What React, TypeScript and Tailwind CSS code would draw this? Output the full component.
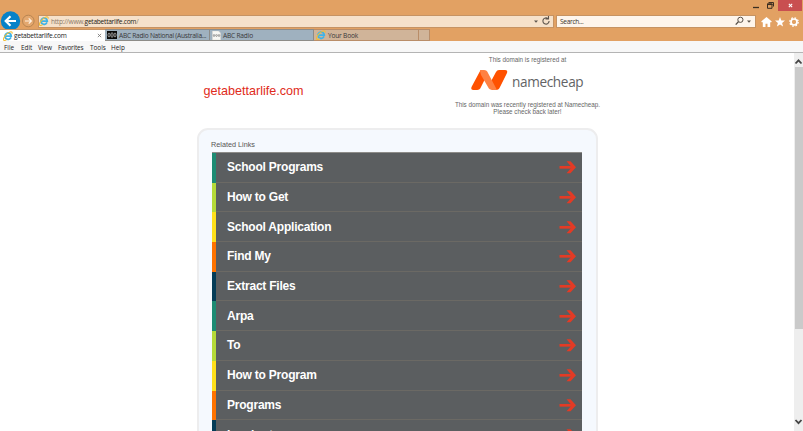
import React from "react";

const ui = "font-['Open_Sans','Noto_Sans',sans-serif]";
const arial = "font-['Liberation_Sans',Arial,sans-serif]";

function IELogo({ className = "" }: { className?: string }) {
  return (
    <svg viewBox="0 0 20 20" className={`h-[10px] w-[10px] shrink-0 ${className}`}>
      <path d="M16 12.8A6.3 6.3 0 1 1 16.5 10.3H5" fill="none" stroke="#3fb3e8" strokeWidth="3.6" />
      <path d="M1.5 18.5C-1 15 7 4 14 1.8c4-1.2 5 .8 3.8 3.7M1.5 18.5c1.5 1.2 4 .2 6-1.2" fill="none" stroke="#f2bd35" strokeWidth="2.1" />
    </svg>
  );
}

function Address() {
  return (
    <div className="flex h-[16px] items-center">
      <svg viewBox="0 0 38 20" className="h-[20px] w-[38px] shrink-0">
        <circle cx="10.5" cy="10" r="9.7" fill="#0782c8" />
        <path d="M16 10H6M10.5 5.2L5.7 10l4.8 4.8" fill="none" stroke="#fff" strokeWidth="2.2" />
        <circle cx="28.3" cy="10" r="5.8" fill="#e3a76e" stroke="#b98551" strokeWidth="1" />
        <path d="M25 10h6M28.7 7.3l2.7 2.7-2.7 2.7" fill="none" stroke="#fff2e2" strokeWidth="1.2" />
      </svg>
      <div className="flex h-[13px] w-[516px] items-center border border-[#c69363] bg-[#f6e1ca]">
        <IELogo />
        <span className="ml-[2px] text-[6.6px] leading-[11px] tracking-[-0.26px] text-[#8b7a69]">
          http://www.<span className="text-[#241c15]">getabettarlife.com</span>/
        </span>
        <svg viewBox="0 0 20 12" className="ml-auto h-[12px] w-[20px]">
          <path d="M1 5.5h4L3 7.7z" fill="#5e554d" />
          <path d="M14.8 3.5A3.1 3.1 0 1 0 16.1 6M15.5 1v3h-3" fill="none" stroke="#5e554d" strokeWidth="1.1" />
        </svg>
      </div>
      <div className="ml-[2px] flex h-[13px] w-[200px] items-center border border-[#c69363] bg-[#fef5ec]">
        <span className="ml-[3px] text-[6.6px] leading-[11px] tracking-[-0.3px] text-[#39332d]">Search...</span>
        <svg viewBox="0 0 20 12" className="ml-auto h-[12px] w-[20px]">
          <circle cx="5.4" cy="4.8" r="2.6" fill="none" stroke="#554d46" strokeWidth="1" />
          <path d="M3.4 6.7L.7 9.6" stroke="#554d46" strokeWidth="1.3" />
          <path d="M12 5.5h4l-2 2.2z" fill="#5e554d" />
        </svg>
      </div>
      <svg viewBox="0 0 42 14" className="ml-[4px] mt-px h-[14px] w-[42px] shrink-0">
        <path d="M6.5 2L1.2 6.5l.8 1 .8-.6V12h2.7V8.7h2V12h2.7V6.9l.8.6.8-1z" fill="#fff" />
        <path d="M20 2l1.3 3.5 3.7.1-2.9 2.3 1 3.6-3.1-2.1-3.1 2.1 1-3.6L15 5.6l3.7-.1z" fill="#fff" />
        <circle cx="34" cy="7" r="3" fill="none" stroke="#fff" strokeWidth="1.7" />
        <circle cx="34" cy="7" r="4.2" fill="none" stroke="#fff" strokeWidth="1.3" strokeDasharray="1.65 1.65" />
      </svg>
    </div>
  );
}

function Tabs() {
  return (
    <div className="flex h-[12px] text-[6.6px] leading-[11px] tracking-[-0.2px] text-[#39383a]">
      <div className="flex w-[105px] items-center border-t border-[#c69363] bg-white">
        <IELogo className="ml-[3px]" />
        <span className="ml-px text-[#222]">getabettarlife.com</span>
        <svg viewBox="0 0 6 6" className="ml-auto mr-[3px] h-[5px] w-[5px]"><path d="M1 1l4 4M5 1L1 5" stroke="#777" /></svg>
      </div>
      <div className="flex w-[105px] items-center border-y border-r border-[#8d8c88] bg-[#9fb1bf]">
        <svg viewBox="0 0 20 16" className="ml-[2px] h-[8px] w-[10px] shrink-0">
          <path fill="#080808" d="M0 0h20v16H0z" />
          <path d="M4 4a2 4 0 1 0 .1 0M10 3a2 5 0 1 0 .1 0M16 4a2 4 0 1 0 .1 0" fill="none" stroke="#eee" strokeWidth="1.2" />
        </svg>
        <span className="ml-[2px] whitespace-nowrap tracking-[-0.25px]">ABC Radio National (Australia...</span>
      </div>
      <div className="flex w-[104px] items-center border-y border-r border-[#8d8c88] bg-[#9fb1bf]">
        <svg viewBox="0 0 18 18" className="ml-[2px] h-[9px] w-[9px] shrink-0">
          <path fill="#f8f7f4" stroke="#ded9d0" d="M1 0h12l4 4v14H1z" />
          <path d="M4 7a1.5 2 0 1 0 .1 0M9 7a1.5 2 0 1 0 .1 0M14 7a1.5 2 0 1 0 .1 0" fill="none" stroke="#777" strokeWidth="1.3" />
        </svg>
        <span className="ml-[2px]">ABC Radio</span>
      </div>
      <div className="flex w-[105px] items-center border-y border-r border-[#b98d68] bg-[#d0b499]">
        <IELogo className="ml-[2px]" />
        <span className="ml-[2px]">Your Book</span>
      </div>
      <div className="w-[11px] border-y border-r border-[#b98d68] bg-[#d0b499]" />
    </div>
  );
}

function Browser() {
  return (
    <header className={`${ui} h-[53px] bg-[#e2a163]`}>
      <div className="flex h-[13px] justify-end">
        <svg viewBox="0 0 28 13" className="h-[13px] w-[28px]">
          <path d="M3 7.5h6" stroke="#3c2e21" strokeWidth="1.3" />
          <path d="M18.5 2.5h5v4" fill="none" stroke="#3c2e21" />
          <path d="M17.5 4h4.5v4.3h-4.5z" fill="none" stroke="#3c2e21" />
          <path d="M17 4.3h5.5" stroke="#3c2e21" strokeWidth="1.5" />
        </svg>
        <div className="mr-px flex h-[11px] w-[24px] items-center justify-center bg-[#c94f50]">
          <svg viewBox="0 0 6 6" className="h-[5px] w-[5px]"><path d="M1 1l4 4M5 1L1 5" stroke="#fff" strokeWidth="1.3" /></svg>
        </div>
      </div>
      <Address />
      <Tabs />
      <nav className="flex h-[12px] items-center border-b border-[#b4b4b4] bg-[#f7f7f7] pl-[4px] pt-[2px] text-[6.4px] leading-[10px] text-[#222]">
        <span className="w-[17px]">File</span>
        <span className="w-[17px]">Edit</span>
        <span className="w-[20px]">View</span>
        <span className="w-[32px] tracking-[-0.2px]">Favorites</span>
        <span className="w-[21px]">Tools</span>
        <span>Help</span>
      </nav>
    </header>
  );
}

const links = [
  ["School Programs", "#1d8b73"],
  ["How to Get", "#b5da38"],
  ["School Application", "#ffe01b"],
  ["Find My", "#ff7300"],
  ["Extract Files", "#043c57"],
  ["Arpa", "#1d8b73"],
  ["To", "#b5da38"],
  ["How to Program", "#ffe01b"],
  ["Programs", "#ff7300"],
  ["Lambert", "#043c57"],
];

function Links() {
  return (
    <section className="ml-[197px] mt-[12px] h-[330px] w-[401px] rounded-t-[11px] border-2 border-[#ededee] bg-[#f5f9fe] pl-[12px] pt-[10px]">
      <h2 className="h-[12px] text-[7.25px] leading-[10px] text-[#555]">Related Links</h2>
      <ul className="ml-px w-[370px] border-t border-[#8d8c89]">
        {links.map(([name, color]) => (
          <li key={name} className="flex h-[29.7px] items-center border-b border-b-[#6b6964] bg-[#5b5e60] pr-[6px]">
            <span className="-mb-px w-[4px] self-stretch" style={{ backgroundColor: color }} />
            <span className="ml-[11px] text-[12px] font-bold leading-[14px] tracking-[-0.22px] text-white">{name}</span>
            <svg viewBox="0 0 17 14" className="ml-auto h-[14px] w-[17px]">
              <path d="M.5 7.3h14" stroke="#e33b25" strokeWidth="2.7" />
              <path d="M7.5 1.3h4L17 7.3l-5.5 6h-4l5.3-6z" fill="#e33b25" />
            </svg>
          </li>
        ))}
      </ul>
    </section>
  );
}

export default function App() {
  return (
    <div className="h-[431px] w-[803px] overflow-hidden bg-white">
      <Browser />
      <div className={`${arial} flex h-[378px]`}>
        <main className="h-[378px] w-[794px] overflow-hidden">
          <div className="flex h-[63px]">
            <h1 className="ml-[203.5px] mt-[30px] w-[239.5px] text-[12.6px] leading-[16px] text-[#df2b20]">getabettarlife.com</h1>
            <div className="flex w-[169px] flex-col items-center text-[6.3px] leading-[7px] text-[#666]">
              <p className="mt-[3px]">This domain is registered at</p>
              <div className="mt-[6px] flex h-[22px] w-[115px] items-center">
                <svg viewBox="0 0 39 22" className="h-[22px] w-[39px] shrink-0">
                  <path d="M29 1h6q3 0 2 3l-7 14q-1 3-4 3h-4l-3-5 7-13q1-2 3-2z" fill="#ff5100" />
                  <path d="M13 1q-3 0-4 3L1.5 18q-1 3 2 3H7q3 0 4-3l4-8z" fill="#ff5100" />
                  <path d="M10 1h4q3 0 4 3l9 17h-4q-4 0-5-3L11 6q-1-3-1-5z" fill="#ff8142" />
                </svg>
                <span className={`${ui} ml-[3px] mt-[4px] text-[13.6px] leading-[18px] tracking-[-0.35px] text-[#626365]`}>namecheap</span>
              </div>
              <p className="mt-[10px] whitespace-nowrap">This domain was recently registered at Namecheap.</p>
              <p>Please check back later!</p>
            </div>
          </div>
          <Links />
        </main>
        <aside className="flex w-[9px] flex-col items-center bg-[#eee]">
          <svg viewBox="0 0 9 14" className="h-[14px] w-[9px]"><path d="M1.5 10.5l3-3.2 3 3.2" fill="none" stroke="#444" strokeWidth="1.8" /></svg>
          <div className="h-[262px] w-[8px] bg-[#cacaca]" />
          <svg viewBox="0 0 9 14" className="mb-[2px] mt-auto h-[14px] w-[9px]"><path d="M1.5 5l3 3.2 3-3.2" fill="none" stroke="#444" strokeWidth="1.8" /></svg>
        </aside>
      </div>
    </div>
  );
}
